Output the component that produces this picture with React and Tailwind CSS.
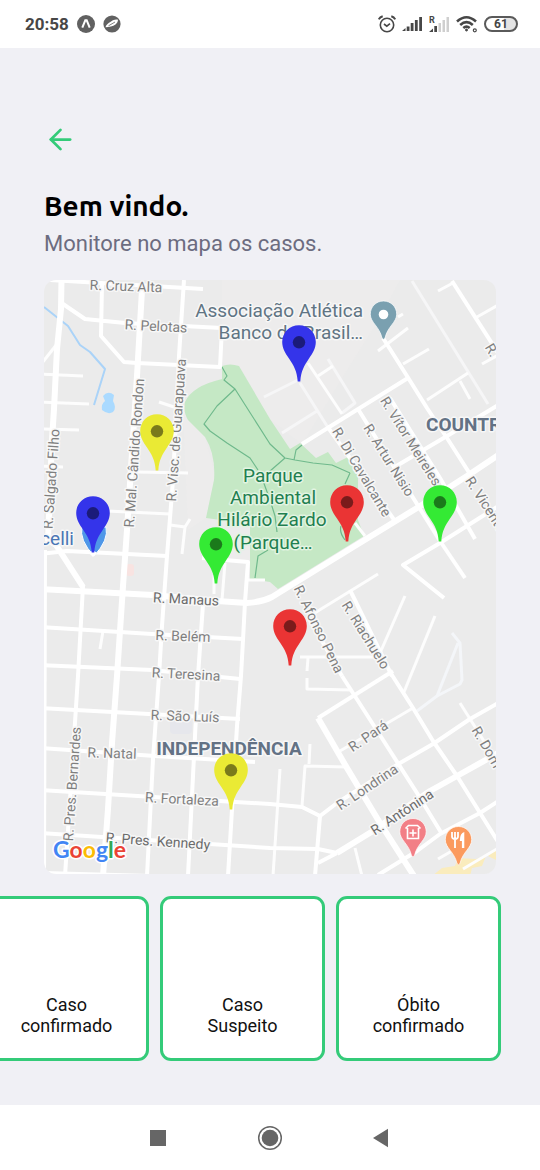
import React from "react";
import { ArrowLeft } from "lucide-react";

const MAP = { x: 44, y: 280, w: 452, h: 594 };

const PIN_COLORS = {
  blue: "#3434ea",
  yellow: "#eaea34",
  green: "#34ea34",
  red: "#ea3434",
};

const CASES = [
  { x: 299, y: 325, color: "blue", label: "Caso 1" },
  { x: 157, y: 414, color: "yellow", label: "Caso 2" },
  { x: 93, y: 496, color: "blue", label: "Caso 3" },
  { x: 216, y: 527, color: "green", label: "Caso 4" },
  { x: 347, y: 485, color: "red", label: "Caso 5" },
  { x: 440, y: 485, color: "green", label: "Caso 6" },
  { x: 290, y: 609, color: "red", label: "Caso 7" },
  { x: 231, y: 753, color: "yellow", label: "Caso 8" },
];

const CATEGORIES = [
  ["Caso", "confirmado"],
  ["Caso", "Suspeito"],
  ["Óbito", "confirmado"],
];

const MAJOR_ROADS = [
  "M61.5 280 L61 309 L57 349 L54 409 L52 440 L48 540 L56 545 L83 587",
  "M142 290 L137 376 L127 530 L123 586 L117 676 L112 743 L108 809 L103 876",
  "M40 589 L153 595 L217 601 L247 603 Q262 602 272 597 L345 552 L417 508 L467 476 L500 454",
  "M318 718 L347 768 L380 823 L414 876",
  "M337 853 L373 831 L430 791 L457 776 L500 752",
];

const ROADS = [
  "M383 338 L407 376 L427 408 L447 438 L470 474",
  "M302 444 L408 378",
  "M393 468 L447 436 L500 404",
  "M452 281 L500 356",
  "M342 676 L385 743 L417 793 L442 834",
  "M310 620 L342 676",
  "M390 672 L413 708 L433 741 L457 776 L500 845",
  "M318 718 L393 671",
  "M320 816 L337 803 L400 763 L433 744 L470 719 L500 702",
  "M318 863 L337 853",
  "M378 875 L417 851 L440 834 L480 813 L500 800",
  "M40 833 L270 848 L318 849 L337 853",
  "M45 550 L44 876",
  "M184 280 L179 356 L173 480 L167 556 L162 626 L159 676 L153 759 L147 876",
  "M83 586 L78 676 L70 800 L65 876",
  "M63 304 L85 319 L125 323 L222 328 L220 367 L137 363 L124 362 L101 336 L102 284",
  "M50 280 L203 289",
  "M203 604 L198 676 L188 876",
  "M202 558 L248 562 L245 602 L243 640 L241 676 L237 726 L228 876",
  "M40 627 L152 634 L243 639",
  "M40 665 L152 670 L240 679",
  "M40 708 L240 719",
  "M40 748 L155 756 L255 762",
  "M40 790 L270 804 L302 807 L320 816 L315 876",
  "M40 873 L300 880",
  "M40 554 L67 551 L167 556",
  "M358 409 L412 496 L440 541 L465 578",
  "M390 398 L440 478 L475 539",
  "M327 426 L395 521",
  "M350 590 L392 676",
  "M500 505 L440 543 L403 565 L444 598",
];

const MINOR_ROADS = [
  "M40 374 L83 376",
  "M40 402 L89 404",
  "M40 429 L79 430",
  "M42 363 L57 344",
  "M40 466 L63 467",
  "M137 472 L188 473",
  "M159 402 L183 410",
  "M107 511 L170 514",
  "M170 525 L185 527 L182 554 M185 527 L190 519",
  "M103 631 L100 649",
  "M225 563 L222 600 M214 575 L214 594",
  "M247 580 L265 580",
  "M308 363 L342 414",
  "M318 376 L333 366",
  "M378 351 L408 328 M398 317 L403 314",
  "M403 364 L429 349",
  "M427 400 L468 373 M460 381 L470 399",
  "M438 291 L453 283 M477 317 L500 304 M482 364 L500 354",
  "M355 523 L365 536",
  "M405 596 L380 653",
  "M435 616 L404 692",
  "M378 574 L313 614",
  "M300 657 L380 657 M308 658 L307 671",
  "M307 678 L307 689 L352 690",
  "M340 751 L413 708",
  "M460 703 L497 762",
  "M438 859 L457 848 M463 869 L500 847",
  "M347 767 L305 766 L302 806 M310 744 L309 764",
  "M280 769 L273 876",
  "M355 848 L362 876",
];

const FAINT_ROADS = [
  "M412 281 L488 404",
  "M300 383 L327 426 M264 397 L300 379 M282 433 L317 411",
  "M328 359 L355 403 L342 413",
];

const STREET_LABELS = [
  { t: "R. Cruz Alta", x: 126, y: 286, r: 2 },
  { t: "R. Pelotas", x: 156, y: 326, r: 3 },
  { t: "R. Mal. Cândido Rondon", x: 134, y: 453, r: -86 },
  { t: "R. Visc. de Guarapuava", x: 176, y: 430, r: -86 },
  { t: "R. Salgado Filho", x: 51, y: 479, r: -86 },
  { t: "R. Pres. Bernardes", x: 72, y: 784, r: -86 },
  { t: "R. Manaus", x: 186, y: 599, r: 3, major: true },
  { t: "R. Belém", x: 183, y: 636, r: 2 },
  { t: "R. Teresina", x: 186, y: 674, r: 3 },
  { t: "R. São Luís", x: 185, y: 716, r: 2 },
  { t: "R. Natal", x: 112, y: 753, r: 2 },
  { t: "R. Fortaleza", x: 182, y: 799, r: 3 },
  { t: "R. Pres. Kennedy", x: 158, y: 841, r: 4, major: true },
  { t: "R. Di Cavalcante", x: 362, y: 472, r: 59 },
  { t: "R. Artur Nisio", x: 389, y: 460, r: 58 },
  { t: "R. Vítor Meireles", x: 411, y: 441, r: 58 },
  { t: "R. Vicente", x: 486, y: 504, r: 57 },
  { t: "R. Afonso Pena", x: 319, y: 629, r: 64 },
  { t: "R. Riachuelo", x: 366, y: 635, r: 58 },
  { t: "R. Pará", x: 368, y: 736, r: -34 },
  { t: "R. Londrina", x: 367, y: 787, r: -34 },
  { t: "R. Antônina", x: 402, y: 812, r: -33, major: true },
  { t: "R. Dom", x: 487, y: 747, r: 60 },
  { t: "R.", x: 492, y: 350, r: 59 },
];

const HALO = { stroke: "#f7f7f7", strokeWidth: 3, strokeLinejoin: "round", paintOrder: "stroke" };

function Roads({ paths, color, width }) {
  return (
    <g fill="none" stroke={color} strokeWidth={width} strokeLinejoin="round">
      {paths.map((d) => (
        <path key={d} d={d} />
      ))}
    </g>
  );
}

function PoiPin({ x, y, color, children }) {
  return (
    <g transform={`translate(${x} ${y})`}>
      <path
        d="M0 -13.500C-7.500 -13.500 -13.200 -7.600 -13.200 -.3C-13.200 8 -4 12 -1.500 23.500Q0 26 1.500 23.500C4 12 13.200 8 13.200 -.3C13.200 -7.600 7.500 -13.500 0 -13.500Z"
        fill={color}
        stroke="#fff"
        strokeOpacity=".7"
        strokeWidth="1"
      />
      {children}
    </g>
  );
}

function MapDrawing() {
  return (
    <svg
      className="block h-full w-full font-['Roboto','Liberation_Sans',sans-serif]"
      viewBox={`${MAP.x} ${MAP.y} ${MAP.w} ${MAP.h}`}
      role="img"
      aria-label="Mapa"
    >
      <rect x="44" y="280" width="452" height="594" fill="#ebebeb" />
      <path d="M222 280 H400 L372 330 L342 378 L302 444 L270 419 L243 372 L222 362Z" fill="#edecec" />
      <path d="M183 410 L188 530 L206 518 L215 476 L205 437Z M205 530 H250 V562 H202Z" fill="#edecec" />
      <rect x="126" y="564" width="8" height="12" rx="3" fill="#f8e3e1" />
      <rect x="170" y="720" width="22" height="14" rx="4" fill="#e6e7ec" />
      <path d="M432 876 L442 868 L455 866 L458 858 L476 859 L486 856 L482 866 L472 868 L470 876Z M488 856 L496 850 V860Z" fill="#faecbd" />

      <path
        d="M222 366 Q230 363 239 366 L246 378 L270 419 L290 449 L300 443 L316 458 L328 452 L336 463 L348 457 L358 476 L358 520 L364 536 L278 589 L270 582 L250 579 V524 L206 518 L214 480 Q216 455 205 437 Q192 424 188 420 Q183 412 185 402 Q192 386 222 379Z"
        fill="#c5e8c5"
      />
      <g fill="none" stroke="#6fb98c" strokeWidth="1.200" strokeLinejoin="round">
        <path d="M222 367 L227 376 L224 380 L235 389 L270 444 L285 458 L295 460 L313 463 L332 465 L350 473" />
        <path d="M235 389 L217 406 L204 424 L210 431 L227 443 L250 458 L258 470" />
        <path d="M302 445 L296 450 L294 460 M285 458 L262 478 L270 500 L275 516 L277 532 M255 578 L258 556 L268 550 M341 526 Q339 532 345 540 M350 473 L345 484" />
      </g>

      <path d="M44 307 L68 326 L80 345 L90 352 L105 369 L94 405" fill="none" stroke="#aad3f8" strokeWidth="2" strokeLinejoin="round" />
      <path d="M103 396 Q108 390 114 395 L113 401 Q117 408 113 412 Q108 415 102 410 Q101 404 105 401Z" fill="#aadaff" />

      <Roads paths={FAINT_ROADS} color="#f6f6f7" width="3" />
      <Roads paths={["M452 633 L460 643 L462 680 L460 684 L437 696 L417 711 M458 643 L437 696"]} color="#f4f6f9" width="3" />
      <Roads paths={MINOR_ROADS} color="#fdfdfd" width="3" />
      <Roads paths={ROADS} color="#ffffff" width="4" />
      <Roads paths={MAJOR_ROADS} color="#ffffff" width="6" />

      <g fontSize="14" textAnchor="middle" style={HALO}>
        {STREET_LABELS.map((s) => (
          <text
            key={s.t}
            transform={`translate(${s.x} ${s.y}) rotate(${s.r})`}
            dy="5"
            fill={s.major ? "#6b6b6b" : "#7f7f7f"}
          >
            {s.t}
          </text>
        ))}
      </g>

      <g style={HALO} fill="#607483" fontSize="19">
        <text x="363" y="317" textAnchor="end">Associação Atlética</text>
        <text x="363" y="339" textAnchor="end">Banco do Brasil…</text>
      </g>
      <g style={HALO} fill="#637285" fontSize="19" fontWeight="700">
        <text x="426" y="431">COUNTRY</text>
        <text x="229" y="755" textAnchor="middle">INDEPENDÊNCIA</text>
      </g>
      <g fill="#1f7f50" fontSize="19" textAnchor="middle" style={{ ...HALO, stroke: "#e2f4e2" }}>
        <text x="273" y="482">Parque</text>
        <text x="273" y="504">Ambiental</text>
        <text x="272" y="526">Hilário Zardo</text>
        <text x="273" y="549">(Parque…</text>
      </g>
      <text x="74" y="545" textAnchor="end" fill="#4a76b5" fontSize="19" style={HALO}>celli</text>

      <path d="M82 527 Q79 540 94 556 Q109 540 106 527Z" fill="#4f97e8" stroke="#fff" strokeWidth="1" />
      <path d="M93 550 l4 3 l-4 4 l-4 -4Z" fill="#fff" />

      <PoiPin x={383.5} y={314.5} color="#7aa0b0">
        <circle r="4.800" fill="#fff" />
      </PoiPin>
      <PoiPin x={413} y={832} color="#f27f86">
        <path d="M-7.500 -3.500 L-4.500 -6.500 H4.500 L7.500 -3.500 M-5.500 -4 V6.500 H5.500 V-4 M0 -2.500 V4.500 M-3.500 1 H3.500" fill="none" stroke="#fff" strokeWidth="1.600" />
      </PoiPin>
      <PoiPin x={458.500} y={840} color="#fb9a5e">
        <path d="M-6.500 -8 V-3.500 Q-6.500 -1 -3.500 -1 Q-.5 -1 -.5 -3.500 V-8 M-3.500 -8 V8" fill="none" stroke="#fff" strokeWidth="1.800" />
        <path d="M5.800 -8 Q1.300 -7 1.300 1 H3.400 V8 H5.800Z" fill="#fff" />
      </PoiPin>

      <text
        x="53"
        y="858"
        fontSize="23"
        fontWeight="700"
        className="font-['Lato','Open_Sans',sans-serif]"
        style={{ ...HALO, stroke: "#ffffff" }}
      >
        <tspan fill="#4285f4">G</tspan>
        <tspan fill="#ea4335">o</tspan>
        <tspan fill="#fbbc05">o</tspan>
        <tspan fill="#4285f4">g</tspan>
        <tspan fill="#34a853">l</tspan>
        <tspan fill="#ea4335">e</tspan>
      </text>
    </svg>
  );
}

function CasePin({ x, y, color, label }) {
  return (
    <button
      type="button"
      aria-label={label}
      className="absolute w-[34px] -translate-x-1/2"
      style={{
        left: `${((x - MAP.x) / MAP.w) * 100}%`,
        top: `${((y - MAP.y) / MAP.h) * 100}%`,
      }}
    >
      <svg viewBox="0 0 34 57" className="block w-full">
        <path
          d="M17 .3C7.500 .3 .2 7.600 .2 17C.2 23.500 3.500 28.500 7 33.500C12 41 15 46 15.700 56.500H18.300C19 46 22 41 27 33.500C30.500 28.500 33.800 23.500 33.800 17C33.800 7.600 26.500 .3 17 .3Z"
          fill={PIN_COLORS[color]}
        />
        <circle cx="17" cy="17.300" r="6.200" fill="#000" fillOpacity=".48" />
      </svg>
    </button>
  );
}

function StatusBar() {
  return (
    <div className="flex h-12 items-center justify-between bg-white pr-[22px] pl-[25px] text-[#474747]">
      <div className="flex items-center gap-2">
        <span className="text-[17px] leading-6 font-bold">20:58</span>
        <svg viewBox="0 0 18 18" className="size-[18px]">
          <circle cx="9" cy="9" r="9" fill="#616161" />
          <path d="M5.300 12.600 L8.300 5.300 H9.700 L12.700 12.600" fill="none" stroke="#fff" strokeWidth="2" />
        </svg>
        <svg viewBox="0 0 18 18" className="size-[18px]">
          <circle cx="9" cy="9" r="8.600" fill="#616161" />
          <path d="M2.600 12.300 C3 8.800 8 6.800 10 5.300 C12 4.200 14 4.200 15 4.800 C14.800 6.600 14.400 8 12.500 9.500 C10 11.800 6 11.800 2.600 12.300Z" fill="#fff" />
          <path d="M5.500 10.800 L12 7" stroke="#616161" strokeWidth=".8" />
        </svg>
      </div>
      <div className="flex items-center gap-1.5">
        <svg viewBox="0 0 18 18" className="size-[18px]" fill="none" stroke="#474747" strokeWidth="1.600">
          <circle cx="9" cy="10" r="6.700" />
          <path d="M.8 4.300 Q2 2 4.700 1.200 M17.200 4.300 Q16 2 13.300 1.200" strokeWidth="2" />
          <path d="M6 9 L8.800 11.200 L12 8.600" />
        </svg>
        <svg viewBox="0 0 21 16" className="h-4 w-[21px]" fill="#474747">
          <path d="M0 15 L3.500 12 V15Z M4.700 10.500 H7.500 V15 H4.700Z M8.700 7 H11.500 V15 H8.700Z M12.900 4 H15.700 V15 H12.900Z M17.200 1 H20 V15 H17.200Z" />
        </svg>
        <svg viewBox="0 0 21 17" className="h-[17px] w-[21px]">
          <text x="0" y="7" fontSize="9" fontWeight="700" fill="#474747">R</text>
          <path d="M0 16 L4 12.500 V16Z M5.300 10 H8 V16 H5.300Z" fill="#474747" />
          <path d="M9.500 7 H12 V16 H9.500Z M13.500 4 H16 V16 H13.500Z M17.500 1 H20 V16 H17.500Z" fill="#cfcfcf" />
        </svg>
        <svg viewBox="0 0 22 18" className="h-[18px] w-[22px]" fill="none" stroke="#474747" strokeWidth="2.600">
          <path d="M1 6.500 Q10.500 -2 20 6.500 M4.200 10 Q10.500 4.300 16.800 10 M7.300 13 Q10.500 10.300 13.700 13" />
          <circle cx="10.500" cy="15" r="1" strokeWidth="1" fill="#474747" />
          <circle cx="18.800" cy="15.300" r="1.500" strokeWidth="1.200" />
        </svg>
        <div className="flex h-4 w-[34px] items-center justify-center rounded-full border-2 border-[#5a5a5a] bg-linear-to-r from-white from-60% to-[#e4e4e4] to-60% text-[12px] leading-3 font-bold">
          61
        </div>
      </div>
    </div>
  );
}

function SystemNav() {
  return (
    <nav className="flex h-[65px] items-center justify-center gap-[82px] bg-white text-[#666]">
      <button type="button" aria-label="Recentes" className="flex size-[30px] items-center justify-center">
        <span className="size-4 bg-[#666]" />
      </button>
      <button type="button" aria-label="Início" className="flex size-[30px] items-center justify-center">
        <svg viewBox="0 0 26 26" className="size-[26px]">
          <circle cx="13" cy="13" r="11.300" fill="none" stroke="#666" strokeWidth="1.500" />
          <circle cx="13" cy="13" r="8.300" fill="#666" />
        </svg>
      </button>
      <button type="button" aria-label="Voltar do sistema" className="flex size-[30px] items-center justify-center">
        <svg viewBox="2 0 18 20" className="h-5 w-[18px]">
          <path d="M2 10 L17 .8 V19.200Z" fill="#666" />
        </svg>
      </button>
    </nav>
  );
}

export default function App() {
  return (
    <div className="flex min-h-screen flex-col overflow-hidden bg-[#f0f0f5] font-['Roboto','Liberation_Sans',sans-serif]">
      <StatusBar />
      <main className="flex flex-1 flex-col pt-[75px]">
        <div className="px-11">
          <button type="button" aria-label="Voltar" className="block text-[#34cb79]">
            <ArrowLeft size={33} strokeWidth={2} />
          </button>
          <h1 className="mt-8 font-['Ubuntu','Noto_Sans',sans-serif] text-[28px] leading-9 font-bold text-black">
            Bem vindo.
          </h1>
          <p className="mt-1.5 text-[22px] leading-7 text-[#6c6c80]">Monitore no mapa os casos.</p>
          <div className="relative mt-[22px] aspect-[452/594] overflow-hidden rounded-[12px]">
            <MapDrawing />
            {CASES.map((c) => (
              <CasePin key={c.label} {...c} />
            ))}
          </div>
        </div>
        <div className="mt-[22px] flex justify-end gap-[11px] overflow-hidden pr-[39px] pb-11">
          {CATEGORIES.map(([first, second], i) => (
            <button
              key={i}
              type="button"
              className="flex size-[165px] shrink-0 flex-col items-center justify-end rounded-[11px] border-3 border-[#34cb79] bg-white pb-[22px] text-[18px] leading-[21px] text-[#111]"
            >
              <span>{first}</span>
              <span>{second}</span>
            </button>
          ))}
        </div>
      </main>
      <SystemNav />
    </div>
  );
}
